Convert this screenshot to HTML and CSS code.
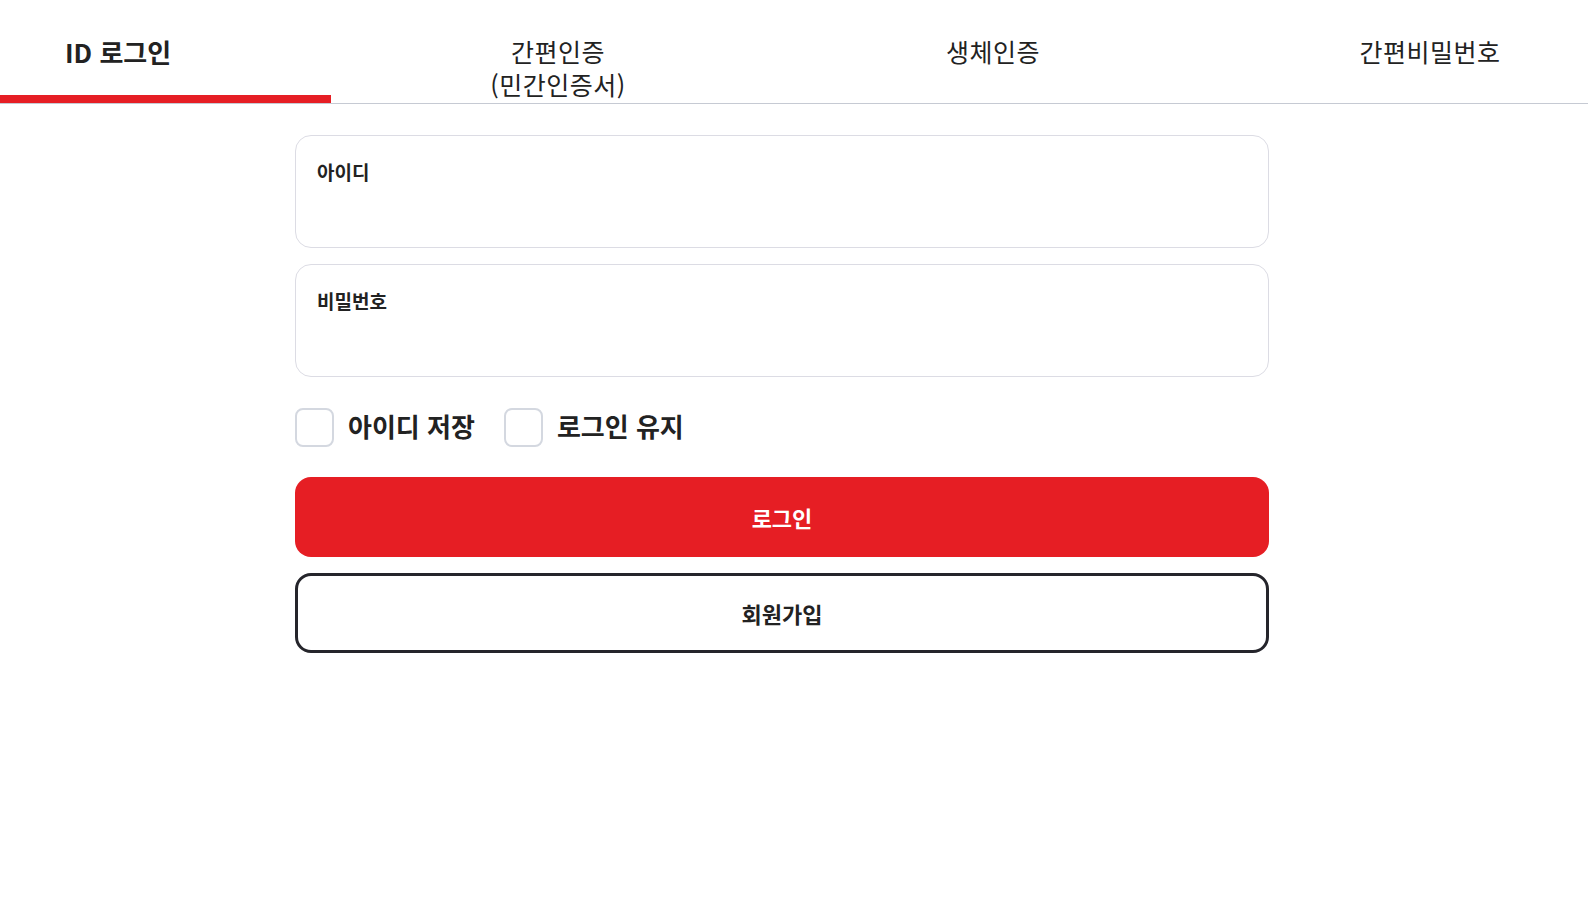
FILE: index.html
```html
<!DOCTYPE html>
<html lang="ko">
<head>
    <meta charset="UTF-8">
    <meta name="viewport" content="width=device-width, initial-scale=1.0">
    <title>로그인</title>
    <link rel="stylesheet" href="styles.css">
</head>
<body>
    <nav class="tabs">
        <a class="tab tab-id active" href="#">ID 로그인</a>
        <a class="tab tab-simple" href="#">간편인증<br>(민간인증서)</a>
        <a class="tab tab-bio" href="#">생체인증</a>
        <a class="tab tab-pin" href="#">간편비밀번호</a>
        <span class="tab-indicator"></span>
    </nav>

    <form class="login-form" onsubmit="return false;">
        <label class="field">
            <span class="field-label">아이디</span>
            <input class="field-input" type="text" name="userId">
        </label>
        <label class="field">
            <span class="field-label">비밀번호</span>
            <input class="field-input" type="password" name="userPw">
        </label>

        <div class="options">
            <label class="check">
                <input type="checkbox" name="saveId">
                <span class="check-box"></span>
                <span class="check-text">아이디 저장</span>
            </label>
            <label class="check">
                <input type="checkbox" name="keepLogin">
                <span class="check-box"></span>
                <span class="check-text">로그인 유지</span>
            </label>
        </div>

        <button class="btn btn-login" type="submit">로그인</button>
        <button class="btn btn-join" type="button">회원가입</button>
    </form>
</body>
</html>
```

FILE: styles.css
```css
/* Login page */
body {
    margin: 0;
    background-color: #fff;
    color: #222;
    font-family: "Noto Sans CJK KR", "Noto Sans", sans-serif;
}

/* Tabs */
.tabs {
    position: relative;
    display: flex;
    align-items: flex-start;
    gap: 320px;
    height: 104px;
    box-sizing: border-box;
    padding: 35px 0 0 65px;
    border-bottom: 1px solid #c6cad3;
}

.tab {
    flex: none;
    font-size: 25px;
    letter-spacing: 0.5px;
    line-height: 33px;
    text-align: center;
    color: #222;
    text-decoration: none;
    white-space: nowrap;
}

.tab.active {
    font-size: 26px;
    letter-spacing: 0;
    font-weight: 700;
}

.tab-id { width: 105px; }
.tab-simple { width: 136px; }
.tab-bio { width: 93px; }
.tab-pin { width: 142px; }

.tab-indicator {
    position: absolute;
    left: 0;
    bottom: 0;
    width: 331px;
    height: 8px;
    background-color: #e61e24;
}

/* Form */
.login-form {
    width: 974px;
    margin: 31px 0 0 295px;
    display: flex;
    flex-direction: column;
}

.field {
    display: flex;
    flex-direction: column;
    height: 113px;
    box-sizing: border-box;
    padding: 22px 21px 0;
    border: 1px solid #dcdce4;
    border-radius: 16px;
    margin-bottom: 16px;
}

.field-label {
    font-size: 19px;
    font-weight: 700;
    line-height: 28px;
    color: #222;
}

.field-input {
    margin-top: 6px;
    border: none;
    outline: none;
    background: transparent;
    font-family: inherit;
    font-size: 18px;
    padding: 0;
    color: #222;
}

.options {
    display: flex;
    align-items: center;
    gap: 29px;
    margin-top: 15px;
}

.check {
    display: flex;
    align-items: center;
    gap: 14px;
    cursor: pointer;
}

.check input {
    display: none;
}

.check-box {
    width: 39px;
    height: 39px;
    box-sizing: border-box;
    border: 2px solid #d4d8e0;
    border-radius: 8px;
}

.check input:checked + .check-box {
    background-color: #e61e24;
    border-color: #e61e24;
}

.check-text {
    font-size: 26px;
    font-weight: 700;
    line-height: 34px;
    margin-top: -3px;
    color: #222;
}

/* Buttons */
.btn {
    height: 80px;
    border-radius: 16px;
    font-family: inherit;
    font-size: 22px;
    font-weight: 700;
    cursor: pointer;
}

.btn-login {
    margin-top: 30px;
    border: none;
    background-color: #e61e24;
    color: #fff;
}

.btn-join {
    margin-top: 16px;
    border: 3px solid #25252b;
    background-color: #fff;
    color: #222;
}
```
